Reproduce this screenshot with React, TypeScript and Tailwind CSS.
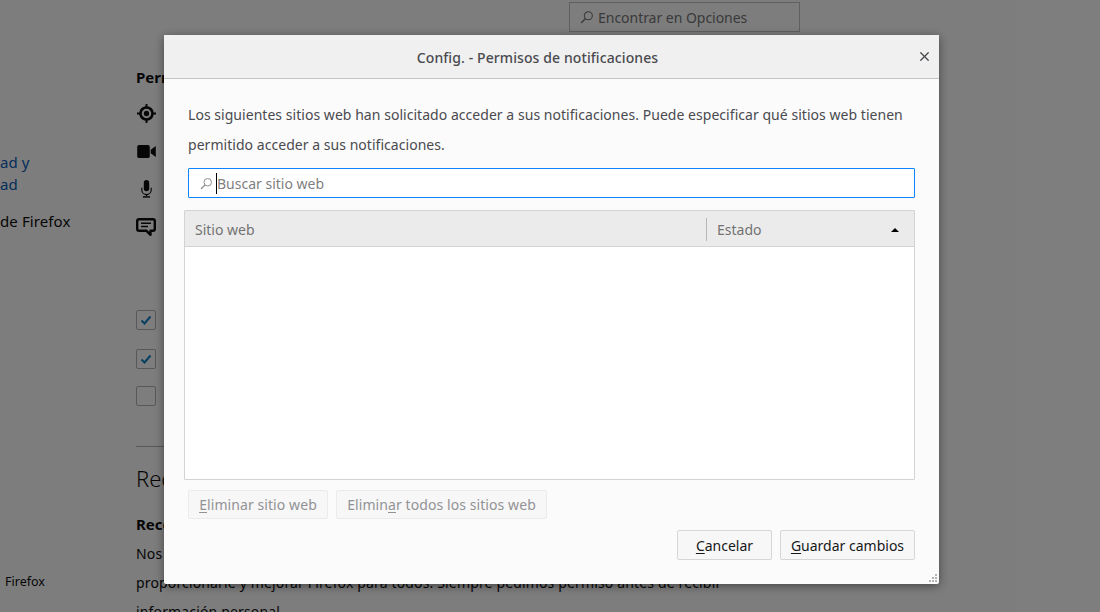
import { X } from "lucide-react";

const font = "font-['Noto_Sans','Open_Sans',sans-serif]";

function SearchIcon({ className }: { className?: string }) {
    return (
        <svg viewBox="0 0 16 16" className={className} fill="none" stroke="currentColor" strokeWidth="1.2">
            <circle cx="9.5" cy="6.5" r="4.6" />
            <path d="M6 10 L1.8 14.2" strokeWidth="1.6" strokeLinecap="round" />
        </svg>
    );
}

function LocationIcon() {
    return (
        <svg viewBox="0 0 20 20" className="size-[19px]" fill="currentColor">
            <path fillRule="evenodd" d="M9 0h2v2.4a7.8 7.8 0 0 1 6.6 6.6H20v2h-2.4a7.8 7.8 0 0 1-6.6 6.6V20H9v-2.4A7.8 7.8 0 0 1 2.4 11H0V9h2.4A7.8 7.8 0 0 1 9 2.4V0zm1 5a5 5 0 1 0 0 10 5 5 0 0 0 0-10z" />
            <circle cx="10" cy="10" r="2.8" />
        </svg>
    );
}

function VideoIcon() {
    return (
        <svg viewBox="0 0 20 14" className="w-[19px] h-[13px]" fill="currentColor">
            <rect x="0" y="0" width="13.5" height="14" rx="2" />
            <path d="M14.5 5.2 L20 1 V13 L14.5 8.8 Z" />
        </svg>
    );
}

function MicIcon() {
    return (
        <svg viewBox="0 0 12 20" className="w-[11px] h-[18px]" fill="currentColor">
            <rect x="3" y="0" width="6" height="12.5" rx="3" />
            <path d="M0.8 8.5 v2.5 a5.2 5.2 0 0 0 10.4 0 v-2.5" fill="none" stroke="currentColor" strokeWidth="1.3" />
            <rect x="5.3" y="15.5" width="1.4" height="3" />
            <rect x="2" y="18" width="8" height="1.6" />
        </svg>
    );
}

function CommentIcon() {
    return (
        <svg viewBox="0 0 20 19" className="w-[20px] h-[19px]" fill="none" stroke="currentColor">
            <path d="M3 1.2 h14 a1.8 1.8 0 0 1 1.8 1.8 v8 a1.8 1.8 0 0 1-1.8 1.8 h-2.5 v4 l-4-4 H3 a1.8 1.8 0 0 1-1.8-1.8 V3 A1.8 1.8 0 0 1 3 1.2z" strokeWidth="2.4" strokeLinejoin="round" />
            <path d="M5 5.3 h10 M5 8.6 h7" strokeWidth="1.5" />
        </svg>
    );
}

function Checkbox({ checked, className }: { checked?: boolean; className?: string }) {
    return (
        <div className={`size-[20px] rounded-[2px] border border-[#b1b1b3] bg-[#fbfbfc] flex items-center justify-center ${className ?? ""}`}>
            {checked && (
                <svg viewBox="0 0 12 12" className="size-[12px]" fill="none" stroke="#0f7fc4" strokeWidth="2">
                    <path d="M1.5 6.5 L4.5 9.5 L10.5 2.5" />
                </svg>
            )}
        </div>
    );
}

function Background() {
    return (
        <div className="flex h-[612px] overflow-hidden bg-[#fbfbfc] text-[#0c0c0d]">
            <div className="w-[136px] shrink-0 flex flex-col text-[15px] tracking-[0.1px]">
                <div className="mt-[151px] text-[#0a5ab4] leading-[22px]">
                    <div>ad y</div>
                    <div>ad</div>
                </div>
                <div className="mt-[15px] leading-[22px]">de Firefox</div>
                <div className="mt-auto mb-[21px] pl-[5px] text-[12.5px] leading-[18px] tracking-normal">Firefox</div>
            </div>
            <div className="flex-1">
                <div className="h-[67px] pt-[2px] pl-[433px]">
                    <div className="w-[231px] h-[30px] border border-[#c0c0c2] flex items-center pl-[10px] gap-[4px] text-[14px] tracking-[-0.03px] text-[#737373]">
                        <SearchIcon className="size-[14px]" />
                        <span>Encontrar en Opciones</span>
                    </div>
                </div>
                <div className="text-[15px] font-bold leading-[20px] h-[20px] whitespace-nowrap">Permisos</div>
                <div className="flex flex-col items-start gap-[18px] mt-[16px]">
                    <div className="h-[20px] w-[20px] flex items-center justify-center"><LocationIcon /></div>
                    <div className="h-[20px] w-[20px] flex items-center justify-center"><VideoIcon /></div>
                    <div className="h-[20px] w-[20px] flex items-center justify-center"><MicIcon /></div>
                    <div className="h-[20px] w-[20px] flex items-center justify-center"><CommentIcon /></div>
                </div>
                <Checkbox checked className="mt-[73px]" />
                <Checkbox checked className="mt-[19px]" />
                <Checkbox className="mt-[17px]" />
                <div className="mt-[40px] h-px w-[620px] bg-[#b1b1b3]" />
                <div className="mt-[14px] text-[22px] font-light leading-[34px] whitespace-nowrap">Recolección</div>
                <div className="mt-[14px] text-[15px] font-bold leading-[30px] whitespace-nowrap">Recolección de datos</div>
                <div className="text-[14px] leading-[29px] tracking-[0.15px] whitespace-nowrap">Nos esforzamos en proporcionarle opciones</div>
                <div className="text-[14px] leading-[29px] tracking-[0.15px] whitespace-nowrap">proporcionarle y mejorar Firefox para todos. Siempre pedimos permiso antes de recibir</div>
                <div className="text-[14px] leading-[29px] tracking-[0.15px] whitespace-nowrap">información personal.</div>
            </div>
        </div>
    );
}

function Key({ children }: { children: string }) {
    return <span className="underline underline-offset-2">{children}</span>;
}

export default function App() {
    return (
        <div className={`relative w-[1100px] h-[612px] overflow-hidden ${font}`}>
            <Background />
            <div className="absolute inset-0 bg-black/50" />

            <div className="absolute left-[164px] top-[35px] w-[775px] h-[549px] rounded-[2px] bg-[#fbfbfb] shadow-[0_2px_10px_rgba(0,0,0,0.45)] flex flex-col text-[#4a4a4f]">
                <div className="relative h-[44px] shrink-0 pt-[2px] pr-[28px] bg-[#f0f0f0] border-b border-[#c4c4c4] flex items-center justify-center text-[14px] tracking-[0.1px] font-medium">
                    Config. - Permisos de notificaciones
                    <X className="absolute right-[7px] top-[14px] size-[15px] text-[#45454a]" strokeWidth={2} />
                </div>

                <div className="flex-1 flex flex-col pt-[21px] pl-[24px] pr-[24px]">
                    <p className="text-[14px] leading-[30px] tracking-[0.04px] whitespace-nowrap">
                        Los siguientes sitios web han solicitado acceder a sus notificaciones. Puede especificar qué sitios web tienen
                        <br />
                        permitido acceder a sus notificaciones.
                    </p>

                    <div className="mt-[8px] h-[30px] bg-white border border-[#0a84ff] rounded-[1px] flex items-center pl-[11px] text-[14px] text-[#7f7f7f]">
                        <SearchIcon className="size-[13px] text-[#8c8c8c]" />
                        <div className="w-px h-[21px] bg-black ml-[3px]" />
                        <span>Buscar sitio web</span>
                    </div>

                    <div className="mt-[12px] -ml-[4px] h-[270px] flex flex-col border border-[#d3d3d3] bg-white rounded-[1px]">
                        <div className="h-[36px] shrink-0 pt-[2px] flex items-center bg-[#ebebeb] border-b border-[#d3d3d3] text-[14px] text-[#737373]">
                            <div className="w-[521px] pl-[10px]">Sitio web</div>
                            <div className="w-px h-[23px] bg-[#b8b8b8]" />
                            <div className="flex-1 pl-[10px] pr-[15px] flex items-center justify-between">
                                <span>Estado</span>
                                <div className="w-0 h-0 border-x-[4px] border-x-transparent border-b-[4px] border-b-black" />
                            </div>
                        </div>
                    </div>

                    <div className="mt-[10px] flex gap-[8px] text-[14px] tracking-[0.08px] text-[#929295]">
                        <button className="w-[140px] h-[29px] border border-[#ebebeb] bg-[#f7f7f7] rounded-[2px]">
                            <Key>E</Key>liminar sitio web
                        </button>
                        <button className="w-[211px] h-[29px] border border-[#ebebeb] bg-[#f7f7f7] rounded-[2px]">
                            Elimin<Key>a</Key>r todos los sitios web
                        </button>
                    </div>

                    <div className="mt-[11px] flex justify-end gap-[8px] text-[14px] text-[#18181a]">
                        <button className="w-[95px] h-[30px] border border-[#d6d6d6] bg-[#f7f7f7] rounded-[2px]">
                            <Key>C</Key>ancelar
                        </button>
                        <button className="w-[135px] h-[30px] border border-[#d6d6d6] bg-[#f7f7f7] rounded-[2px]">
                            <Key>G</Key>uardar cambios
                        </button>
                    </div>
                </div>

                <svg viewBox="0 0 9 9" className="absolute right-[1px] bottom-[1px] size-[9px]" fill="#b5b5b5">
                    <rect x="6" y="0" width="2" height="2" />
                    <rect x="3" y="3" width="2" height="2" />
                    <rect x="6" y="3" width="2" height="2" />
                    <rect x="0" y="6" width="2" height="2" />
                    <rect x="3" y="6" width="2" height="2" />
                    <rect x="6" y="6" width="2" height="2" />
                </svg>
            </div>
        </div>
    );
}
